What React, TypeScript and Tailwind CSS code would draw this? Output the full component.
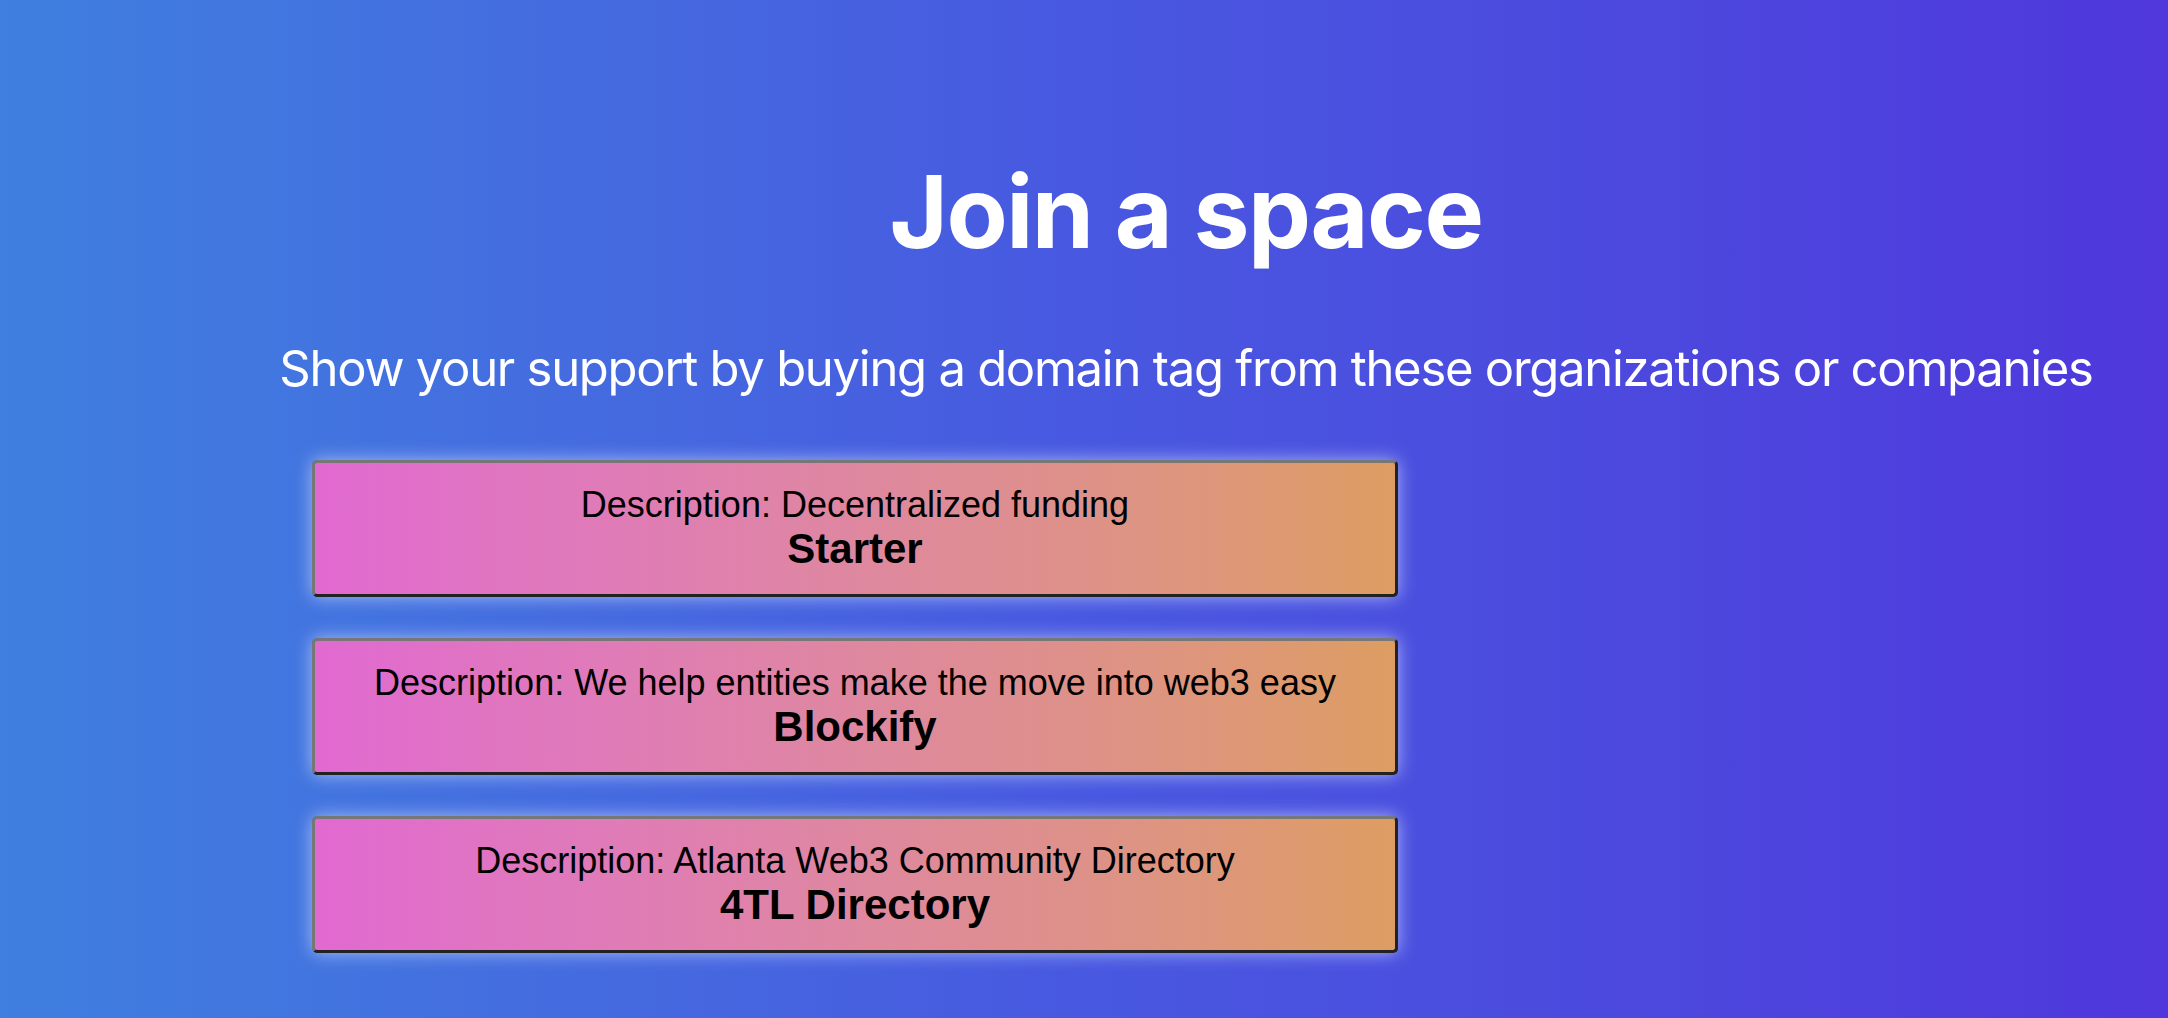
import React from "react";

const spaces = [
  { desc: "Description: Decentralized funding", name: "Starter" },
  { desc: "Description: We help entities make the move into web3 easy", name: "Blockify" },
  { desc: "Description: Atlanta Web3 Community Directory", name: "4TL Directory" },
];

export default function App() {
  return (
    <div className="min-h-screen w-full bg-gradient-to-r from-[#3f7fdf] via-[#4858e0] to-[#4f37dc] pl-[204px] pb-[64px]">
      <h1
        className="pt-[162px] text-center text-[100px] leading-[100px] font-bold tracking-[-0.015em] text-white"
        style={{ fontFamily: "Inter, 'Noto Sans', sans-serif" }}
      >
        Join a space
      </h1>
      <p
        className="mt-[82px] text-center text-[49px] leading-[49px] font-normal tracking-[-0.026em] text-white"
        style={{ fontFamily: "Inter, 'Noto Sans', sans-serif" }}
      >
        Show your support by buying a domain tag from these organizations or companies
      </p>
      <div className="mt-[67px] ml-[108px] flex w-[1086px] flex-col gap-[41px]">
        {spaces.map((s) => (
          <button
            key={s.name}
            type="button"
            className="flex w-full flex-col items-center rounded-[5px] border-[3px] border-t-[#777777] border-l-[#777777] border-b-[#222222] border-r-[#222222] bg-gradient-to-r from-[#e169d1] to-[#dd9d62] py-[21px] text-black shadow-[0_0_18px_rgba(205,220,255,0.7)]"
            style={{ fontFamily: "'Liberation Sans', Arial, sans-serif" }}
          >
            <span className="block text-[36px] leading-[41px] font-normal">{s.desc}</span>
            <span className="block text-[42px] leading-[48px] font-bold">{s.name}</span>
          </button>
        ))}
      </div>
    </div>
  );
}
